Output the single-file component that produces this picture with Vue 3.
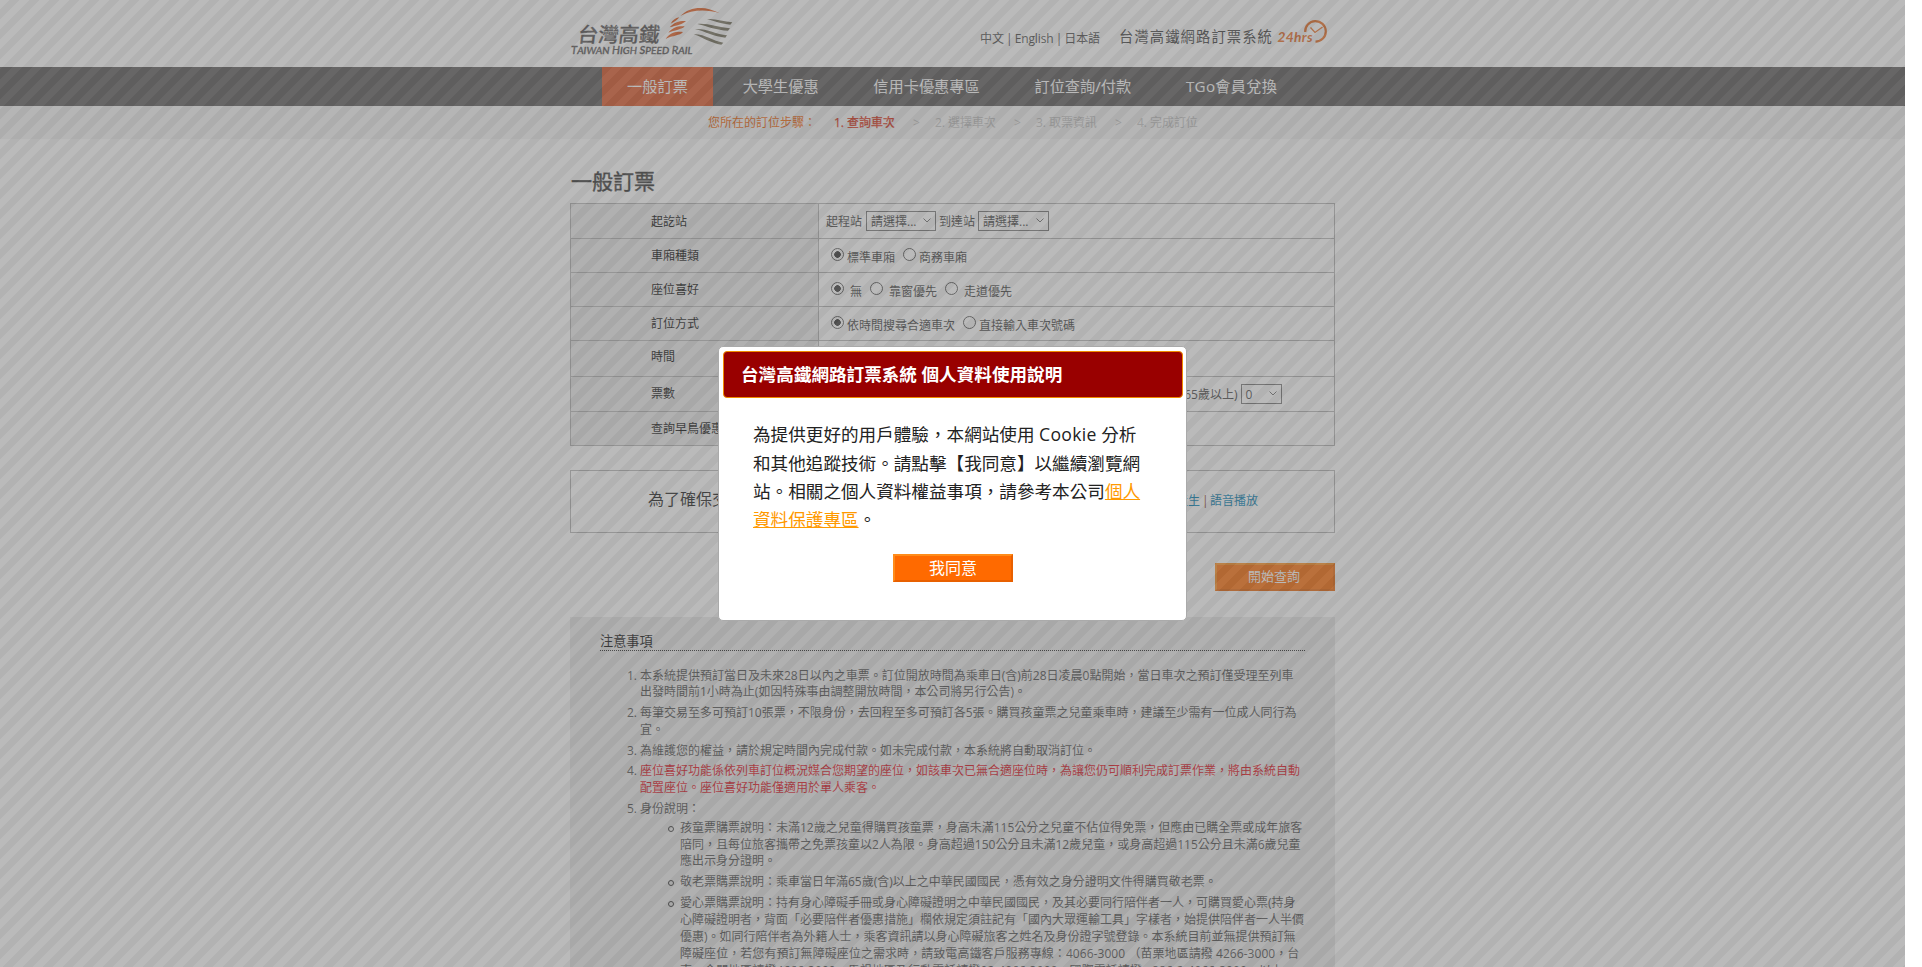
<script setup>
const nav = ['一般訂票', '大學生優惠', '信用卡優惠專區', '訂位查詢/付款', 'TGo會員兌換']
const steps = ['1. 查詢車次', '2. 選擇車次', '3. 取票資訊', '4. 完成訂位']
const notes = [
  { lines: ['本系統提供預訂當日及未來28日以內之車票。訂位開放時間為乘車日(含)前28日凌晨0點開始，當日車次之預訂僅受理至列車', '出發時間前1小時為止(如因特殊事由調整開放時間，本公司將另行公告)。'] },
  { lines: ['每筆交易至多可預訂10張票，不限身份，去回程至多可預訂各5張。購買孩童票之兒童乘車時，建議至少需有一位成人同行為', '宜。'] },
  { lines: ['為維護您的權益，請於規定時間內完成付款。如未完成付款，本系統將自動取消訂位。'] },
  { red: true, lines: ['座位喜好功能係依列車訂位概況媒合您期望的座位，如該車次已無合適座位時，為讓您仍可順利完成訂票作業，將由系統自動', '配置座位。座位喜好功能僅適用於單人乘客。'] },
  { lines: ['身份說明：'] }
]
const subs = [
  ['孩童票購票說明：未滿12歲之兒童得購買孩童票，身高未滿115公分之兒童不佔位得免票，但應由已購全票或成年旅客', '陪同，且每位旅客攜帶之免票孩童以2人為限。身高超過150公分且未滿12歲兒童，或身高超過115公分且未滿6歲兒童', '應出示身分證明。'],
  ['敬老票購票說明：乘車當日年滿65歲(含)以上之中華民國國民，憑有效之身分證明文件得購買敬老票。'],
  ['愛心票購票說明：持有身心障礙手冊或身心障礙證明之中華民國國民，及其必要同行陪伴者一人，可購買愛心票(持身', '心障礙證明者，背面「必要陪伴者優惠措施」欄依規定須註記有「國內大眾運輸工具」字樣者，始提供陪伴者一人半價', '優惠)。如同行陪伴者為外籍人士，乘客資訊請以身心障礙旅客之姓名及身份證字號登錄。本系統目前並無提供預訂無', '障礙座位，若您有預訂無障礙座位之需求時，請致電高鐵客戶服務專線：4066-3000 （苗栗地區請撥 4266-3000，台', '東、金門地區請撥4666-3000，馬祖地區及行動電話請撥02-4066-3000，國際電話請撥 +886-2-4066-3000，以上']
]
</script>

<template>
  <div class="page">
    <header class="head">
      <div class="logo">
        <svg class="swoosh" viewBox="0 0 540 200" width="180" height="66.67">
          <g fill="#e2591c">
            <path d="M361 48 C392 16 440 18 480 40 C440 28 397 28 361 48Z" />
            <path d="M332 71 C337 61 346 54 358 52 C353 59 343 66 332 71Z" />
            <path d="M329 82 C342 67 358 62 378 63 C370 72 348 77 329 82Z" />
            <path d="M325 98 C338 82 354 77 374 79 C366 89 344 91 325 98Z" />
            <path d="M317 117 C330 98 348 94 369 96 C361 107 336 106 317 117Z" />
          </g>
          <g fill="#706c58">
            <path d="M441 57 C465 55 492 64 517 67 L511 74 C485 72 465 64 441 57Z" />
            <path d="M412 72 C442 69 476 82 510 85 L504 92 C470 91 445 80 412 72Z" />
            <path d="M405 87 C440 85 468 103 501 106 L496 113 C462 110 438 95 405 87Z" />
            <path d="M401 103 C432 101 458 123 490 128 L484 134 C452 130 431 113 401 103Z" />
          </g>
        </svg>
        <div class="logo-zh">台灣高鐵</div>
        <div class="logo-en">T<small>AIWAN</small> H<small>IGH</small> S<small>PEED</small> R<small>AIL</small></div>
      </div>
      <div class="lang">中文 | English | 日本語</div>
      <div class="sys">台灣高鐵網路訂票系統</div>
      <div class="hrs">24hrs
        <svg class="clock" viewBox="0 0 26 26" width="26" height="26">
          <path d="M2.2 14 A10.3 10.3 0 1 1 12.5 23.7" fill="none" stroke="#e86a1e" stroke-width="2.2" />
          <path d="M7.5 9.5 L12 14.5 L19.5 9" fill="none" stroke="#e86a1e" stroke-width="1.3" />
        </svg>
      </div>
    </header>

    <nav class="nav">
      <a v-for="(n, i) in nav" :key="n" :class="{ on: i === 0, tgo: i === 4 }">{{ n }}</a>
    </nav>

    <div class="steps">
      <span class="lead">您所在的訂位步驟：</span>
      <template v-for="(s, i) in steps" :key="s">
        <span v-if="i" class="gt">&gt;</span>
        <span class="step" :class="{ cur: i === 0 }">{{ s }}</span>
      </template>
    </div>

    <main class="main">
      <h1>一般訂票</h1>
      <div class="form">
        <div class="row r1"><label>起訖站</label>
          <div class="val">起程站
            <span class="sel s1">請選擇...<svg viewBox="0 0 8 5" width="8" height="5"><path d="M.5 .5 L4 4 L7.5 .5" /></svg></span>
            <span class="to">到達站</span>
            <span class="sel s2">請選擇...<svg viewBox="0 0 8 5" width="8" height="5"><path d="M.5 .5 L4 4 L7.5 .5" /></svg></span>
          </div>
        </div>
        <div class="row r2"><label>車廂種類</label>
          <div class="val"><i class="radio on"></i><b>標準車廂</b><i class="radio"></i><b>商務車廂</b></div>
        </div>
        <div class="row r3"><label>座位喜好</label>
          <div class="val wide"><i class="radio on"></i><b>無</b><i class="radio"></i><b>靠窗優先</b><i class="radio"></i><b>走道優先</b></div>
        </div>
        <div class="row r4"><label>訂位方式</label>
          <div class="val"><i class="radio on"></i><b>依時間搜尋合適車次</b><i class="radio"></i><b>直接輸入車次號碼</b></div>
        </div>
        <div class="row r5"><label>時間</label><div class="val"></div></div>
        <div class="row r6"><label>票數</label>
          <div class="val"><span class="age">(65歲以上)</span>
            <span class="sel s3">0<svg viewBox="0 0 8 5" width="8" height="5"><path d="M.5 .5 L4 4 L7.5 .5" /></svg></span>
          </div>
        </div>
        <div class="row r7"><label>查詢早鳥優惠</label><div class="val"></div></div>
      </div>

      <div class="captcha">
        <span class="sec">為了確保交</span>
        <span class="links"><a>產生</a><em>|</em><a>語音播放</a></span>
      </div>

      <div class="submit"><button class="btn">開始查詢</button></div>

      <section class="notes">
        <h2>注意事項</h2>
        <div v-for="(n, i) in notes" :key="i" class="note">
          <span class="num">{{ i + 1 }}.</span>
          <div :class="{ red: n.red }"><p v-for="l in n.lines" :key="l">{{ l }}</p></div>
        </div>
        <div class="subs">
          <div v-for="(s, i) in subs" :key="i" class="sub">
            <i class="dot"></i>
            <div><p v-for="l in s" :key="l" :class="{ phone: l.includes('3000') }">{{ l }}</p></div>
          </div>
        </div>
      </section>
    </main>

    <div class="overlay"></div>

    <div class="dialog">
      <div class="bar">台灣高鐵網路訂票系統 個人資料使用說明</div>
      <div class="body">
        <div>為提供更好的用戶體驗，本網站使用 <span class="ck">Cookie</span> 分析</div>
        <div>和其他追蹤技術。請點擊【我同意】以繼續瀏覽網</div>
        <div>站。相關之個人資料權益事項，請參考本公司<a>個人</a></div>
        <div><a>資料保護專區</a>。</div>
      </div>
      <button class="btn agree">我同意</button>
    </div>
  </div>
</template>

<style>
html, body { background: #fff; overflow: hidden; }
</style>

<style scoped>
* { box-sizing: border-box; margin: 0; padding: 0; }
.page {
  position: relative; width: 1905px; height: 967px; overflow: hidden; background: #fff;
  font: 12px/16.8px "Open Sans", "Noto Sans CJK TC", sans-serif; color: #444; white-space: nowrap;
}
.head { display: flex; height: 67px; padding-left: 570px; }
.logo { position: relative; width: 410px; color: #525050; padding-top: 21px; }
.swoosh { position: absolute; left: -10px; top: 0; }
.logo-zh { font-size: 20.5px; line-height: 26px; padding-left: 8px; transform: skewX(-7deg); font-weight: 500; letter-spacing: -.1px; -webkit-text-stroke: .2px #525050; }
.logo-en { font: italic 500 11.2px/12px Lato, sans-serif; padding-left: 1px; margin-top: -3px; letter-spacing: 0; -webkit-text-stroke: .3px #525050; }
.logo-en small { font-size: 10.2px; }
.lang { width: 139px; font-size: 12px; letter-spacing: -.12px; word-spacing: -.8px; line-height: 18px; padding-top: 30px; color: #4a4a4a; }
.sys { width: 158.5px; font-size: 14.3px; letter-spacing: 1.1px; line-height: 20px; padding-top: 27px; color: #404040; }
.hrs { position: relative; font: italic 700 13.8px/16px Lato, sans-serif; color: #e86a1e; padding-top: 29px; letter-spacing: .3px; }
.clock { position: absolute; left: 25px; top: 18px; }

.nav { display: flex; height: 39px; padding-left: 602px; gap: 4.6px; background: #595757; color: #fff; font-size: 15.2px; line-height: 38px; }
.nav a { padding: 0 25.1px; }
.nav a.on { background: #dc5222; }
.nav a.tgo { letter-spacing: .3px; }

.steps { display: flex; height: 33px; padding-left: 708px; background: #f4f4f4; color: #c0c0c0; line-height: 34px; }
.lead { width: 126px; color: #ef6000; }
.step { width: 79px; letter-spacing: -.05px; }
.step.cur { color: #d8290c; -webkit-text-stroke: .25px #d8290c; }
.gt { width: 22px; color: #c0c0c0; }

.main { width: 765px; margin-left: 570px; }
h1 { font-size: 21px; font-weight: 400; line-height: 30px; padding-top: 27px; height: 64px; color: #333; padding-left: 1px; -webkit-text-stroke: .4px #333; }
.form { border: 1px solid #b5b5b5; border-bottom: 0; }
.row { display: flex; border-bottom: 1px solid #b5b5b5; height: 34px; }
.row label { width: 248px; background: #ebebeb; padding-left: 80px; border-right: 1px solid #b5b5b5; line-height: 34px; color: #0a0a0a; }
.val { display: flex; align-items: center; padding-left: 7px; line-height: 20px; }
.val b { font-weight: 400; padding-top: 5px; margin: 0 8px 0 3px; }
.val.wide b { margin: 0 8px 0 6px; }
.r1 { height: 35px; }
.r1 label { line-height: 36px; }
.r1 .val { padding-top: 1px; }
.r5 { height: 36px; }
.r5 label { line-height: 32px; }
.r6 { height: 35px; }
.r6 .val { padding-top: 2px; }
.sel { position: relative; display: inline-block; height: 20px; border: 1px solid #767676; padding-left: 4px; line-height: 19px; margin-top: -2px; }
.sel svg { position: absolute; right: 4px; top: 6px; }
.sel path { fill: none; stroke: #666; stroke-width: 1; }
.s1 { width: 70px; margin-left: 4px; }
.to { margin-left: 3px; }
.s2 { width: 71px; margin-left: 3px; }
.s3 { width: 41px; margin-left: 3px; }
.age { width: 411.5px; text-align: right; }
.radio { width: 13px; height: 13px; border: 1px solid #555; border-radius: 50%; margin-top: -2px; }
.radio.on { margin-left: 5px; background: radial-gradient(circle, #333 0 3px, transparent 3.6px); }

.captcha { display: flex; align-items: center; height: 63px; border: 1px solid #b5b5b5; margin-top: 24px; padding-left: 77px; }
.sec { font-size: 16px; width: 528px; padding-bottom: 5px; color: #1a1a1a; }
.links { display: flex; color: #007eb4; }
.links em { font-style: normal; color: #863c1a; margin: 0 1.5px 0 2px; }

.submit { display: flex; justify-content: flex-end; margin-top: 30px; }
.btn { width: 120px; height: 28px; border: 2px solid; border-color: #ff8c1a #e86000 #e86000 #ff8c1a; background: #ff6a00; color: #fff; font: 13px/22px "Open Sans", "Noto Sans CJK TC", sans-serif; }
.submit .btn { padding: 0 2px 2px 0; line-height: 20px; }

.notes { background: #ebebeb; margin-top: 26px; padding: 16px 30px 0; height: 360px; color: #4c4c4c; }
.notes h2 { font-size: 13.2px; font-weight: 400; line-height: 17px; height: 18px; border-bottom: 1px dotted #222; color: #0a0a0a; margin-bottom: 16.5px; }
.note { display: flex; margin-bottom: 4px; }
.num { width: 37px; text-align: right; margin-right: 3px; }
.red { color: #e00c18; }
.subs { margin-top: -2px; padding-left: 68px; }
.sub { display: flex; margin-bottom: 4px; }
.sub:last-child p { position: relative; top: .4px; }
.phone { letter-spacing: .06px; }
.dot { width: 6px; height: 6px; border: 1px solid #333; border-radius: 50%; margin: 6px 6px 0 0; }

.overlay {
  position: absolute; inset: 0; opacity: .5;
  background: linear-gradient(135deg, #757575 25%, #656565 25% 50%, #757575 50% 75%, #656565 75%) 0 0 / 20px 20px;
}
.dialog { position: absolute; left: 718px; top: 346px; width: 469px; height: 275px; background: #fff; border: 1px solid #aaa; border-radius: 5px; padding: 4px; color: #222; }
.bar { height: 47px; width: 460px; background: #900; border: 1px solid #f08c00; border-radius: 4px; color: #fff; font-weight: 700; font-size: 17.6px; line-height: 44px; padding-left: 17px; }
.body { padding: 22.4px 0 0 30px; font-size: 17.6px; line-height: 28.2px; }
.ck { letter-spacing: .3px; }
.body a { color: #f90; text-decoration: underline; }
.agree { display: block; margin: 20.8px 0 0 170px; font-size: 16px; line-height: 24px; }
</style>
